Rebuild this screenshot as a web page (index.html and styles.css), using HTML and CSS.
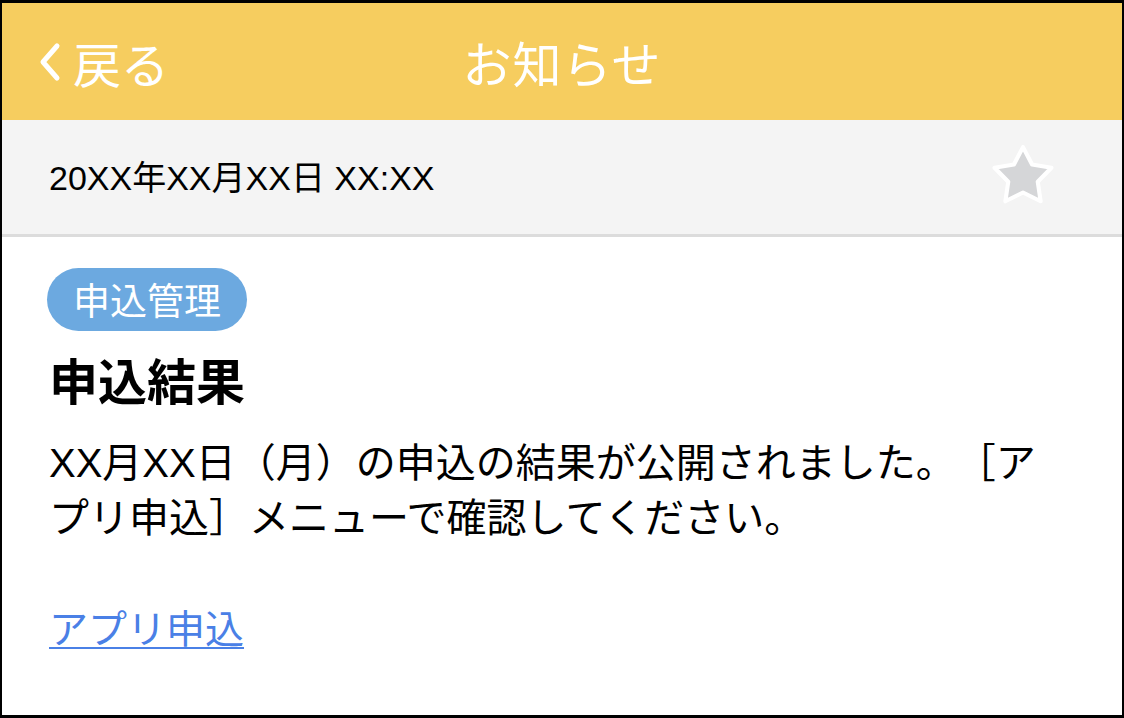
FILE: index.html
```html
<!DOCTYPE html>
<html lang="ja">
<head>
<meta charset="utf-8">
<title>お知らせ</title>
<link rel="stylesheet" href="styles.css">
</head>
<body>
<div class="frame">
  <header class="header">
    <a class="back" href="#">
      <svg class="chev" width="24" height="40" viewBox="0 0 24 40" aria-hidden="true">
        <polyline points="19,4 5,20 19,36" fill="none" stroke="#ffffff" stroke-width="5" stroke-linecap="round" stroke-linejoin="round"/>
      </svg>
      <span>戻る</span>
    </a>
    <h1 class="title">お知らせ</h1>
    <div class="spacer"></div>
  </header>
  <div class="datebar">
    <span class="date">20XX年XX月XX日 XX:XX</span>
    <svg class="star" width="66" height="66" viewBox="0 0 64 64" aria-hidden="true">
      <path d="M32 4 L40.8 20.9 L59.6 24 L46.3 37.6 L49.1 56.5 L32 48 L14.9 56.5 L17.7 37.6 L4.4 24 L23.2 20.9 Z" fill="#d5d6d8" stroke="#ffffff" stroke-width="4" stroke-linejoin="round"/>
    </svg>
  </div>
  <main class="content">
    <span class="badge">申込管理</span>
    <h2 class="heading">申込結果</h2>
    <p class="body">XX月XX日（月）の申込の結果が公開されました。［アプリ申込］メニューで確認してください。</p>
    <a class="link" href="#">アプリ申込</a>
  </main>
</div>
</body>
</html>
```
FILE: styles.css
```css
* { box-sizing: border-box; }
html, body { margin: 0; padding: 0; background: #000; }
body {
  font-family: "Noto Sans CJK JP", "Noto Sans", sans-serif;
  text-spacing-trim: space-all;
}
.frame {
  width: 1124px;
  height: 718px;
  border-style: solid;
  border-color: #000;
  border-width: 3px 2px 3px 2px;
  background: #fff;
  display: flex;
  flex-direction: column;
  overflow: hidden;
}
.header {
  height: 117px;
  flex: none;
  background: #f6cd5f;
  display: grid;
  grid-template-columns: 1fr auto 1fr;
  align-items: center;
  color: #fff;
}
.back {
  display: flex;
  align-items: center;
  gap: 11px;
  padding-left: 36px;
  color: #fff;
  text-decoration: none;
  font-size: 48px;
  line-height: 1;
}
.chev { display: block; }
.title {
  margin: 0;
  font-size: 49px;
  font-weight: 400;
  line-height: 1;
  letter-spacing: 1px;
}
.datebar {
  height: 117px;
  flex: none;
  background: #f4f4f4;
  border-bottom: 3px solid #dcdcdc;
  display: flex;
  align-items: center;
  justify-content: space-between;
  padding: 0 66px 3px 47px;
}
.date {
  font-family: "Liberation Sans", "Noto Sans CJK JP", sans-serif;
  font-size: 34px;
  color: #000;
}
.star { display: block; }
.content {
  padding: 31px 70px 0 45px;
  display: flex;
  flex-direction: column;
  align-items: flex-start;
}
.badge {
  height: 63px;
  line-height: 63px;
  padding: 0 26px;
  border-radius: 32px;
  background: #6ca9e0;
  color: #fff;
  font-size: 37px;
}
.heading {
  margin: 19px 0 0 2px;
  font-size: 49px;
  font-weight: 700;
  line-height: 57px;
  color: #000;
}
.body {
  margin: 29px 0 0 2px;
  font-family: "Liberation Sans", "Noto Sans CJK JP", sans-serif;
  font-size: 40px;
  line-height: 55px;
  color: #000;
}
.link {
  margin: 53px 0 0 2px;
  font-size: 39px;
  line-height: 55px;
  color: #4a80e6;
  text-decoration: underline;
  text-underline-offset: 4px;
  text-decoration-thickness: 2px;
}
```
